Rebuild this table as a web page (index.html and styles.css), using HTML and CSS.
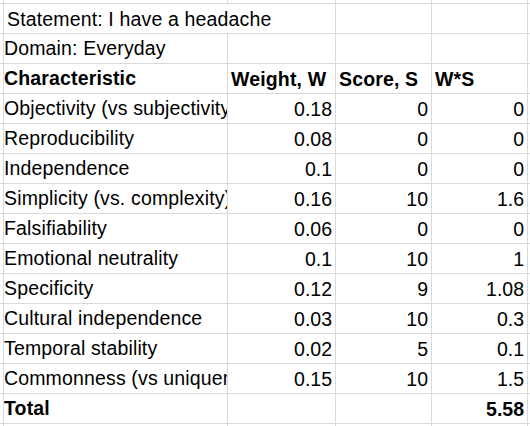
FILE: index.html
```html
<!DOCTYPE html>
<html>
<head>
<meta charset="utf-8">
<link rel="stylesheet" href="styles.css">
</head>
<body>
<div class="sheet">
  <div class="c"></div><div class="c"></div><div class="c"></div><div class="c"></div><div class="c"></div><div class="c"></div>

  <div class="c"></div><div class="c t span2">Statement: I have a headache</div><div class="c"></div><div class="c"></div><div class="c"></div>
  <div class="c"></div><div class="c t">Domain: Everyday</div><div class="c"></div><div class="c"></div><div class="c"></div><div class="c"></div>
  <div class="c"></div><div class="c t b">Characteristic</div><div class="c t b">Weight, W</div><div class="c t b">Score, S</div><div class="c t b">W*S</div><div class="c"></div>

  <div class="c"></div><div class="c t">Objectivity (vs subjectivity)</div><div class="c n">0.18</div><div class="c n">0</div><div class="c n">0</div><div class="c"></div>
  <div class="c"></div><div class="c t">Reproducibility</div><div class="c n">0.08</div><div class="c n">0</div><div class="c n">0</div><div class="c"></div>
  <div class="c"></div><div class="c t">Independence</div><div class="c n">0.1</div><div class="c n">0</div><div class="c n">0</div><div class="c"></div>
  <div class="c"></div><div class="c t">Simplicity (vs. complexity)</div><div class="c n">0.16</div><div class="c n">10</div><div class="c n">1.6</div><div class="c"></div>
  <div class="c"></div><div class="c t">Falsifiability</div><div class="c n">0.06</div><div class="c n">0</div><div class="c n">0</div><div class="c"></div>
  <div class="c"></div><div class="c t">Emotional neutrality</div><div class="c n">0.1</div><div class="c n">10</div><div class="c n">1</div><div class="c"></div>
  <div class="c"></div><div class="c t">Specificity</div><div class="c n">0.12</div><div class="c n">9</div><div class="c n">1.08</div><div class="c"></div>
  <div class="c"></div><div class="c t">Cultural independence</div><div class="c n">0.03</div><div class="c n">10</div><div class="c n">0.3</div><div class="c"></div>
  <div class="c"></div><div class="c t">Temporal stability</div><div class="c n">0.02</div><div class="c n">5</div><div class="c n">0.1</div><div class="c"></div>
  <div class="c"></div><div class="c t">Commonness (vs uniqueness)</div><div class="c n">0.15</div><div class="c n">10</div><div class="c n">1.5</div><div class="c"></div>
  <div class="c"></div><div class="c t b">Total</div><div class="c"></div><div class="c"></div><div class="c n b">5.58</div><div class="c"></div>

  <div class="c"></div><div class="c"></div><div class="c"></div><div class="c"></div><div class="c"></div><div class="c"></div>
</div>
</body>
</html>
```

FILE: styles.css
```css
html, body {
  margin: 0;
  padding: 0;
  background: #ffffff;
}

body {
  width: 530px;
  height: 426px;
  overflow: hidden;
}

.sheet {
  display: grid;
  grid-template-columns: 3px 223px 107px 95px 95px 2px;
  grid-template-rows: 3px repeat(14, 29px) 2px;
  gap: 1px;
  background: #d9d9d9;
  width: 530px;
  height: 426px;
  font-family: "Liberation Sans", Arial, sans-serif;
  font-size: 19.5px;
  color: #000000;
}

.c {
  background: #ffffff;
  overflow: hidden;
  white-space: nowrap;
  line-height: 29px;
  padding: 1px 3px 0 3px;
  box-sizing: border-box;
  min-width: 0;
}

.sheet > .c:nth-child(6n+1),
.sheet > .c:nth-child(6n) {
  padding: 0;
}

.span2 {
  grid-column: span 2;
}

.t {
  text-align: left;
  letter-spacing: 0.15px;
}

.n {
  text-align: right;
}

.b {
  font-weight: bold;
}
```
